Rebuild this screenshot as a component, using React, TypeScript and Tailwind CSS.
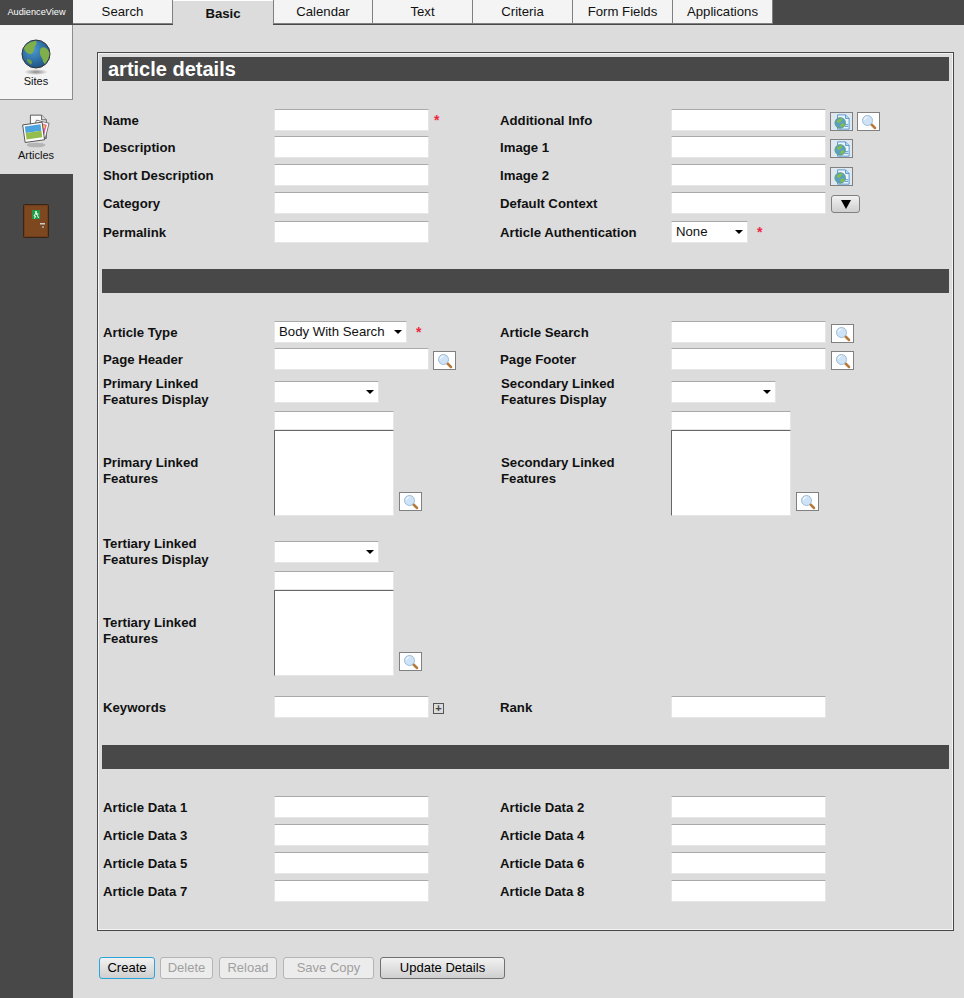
import React from "react";

const tabs = ["Search", "Basic", "Calendar", "Text", "Criteria", "Form Fields", "Applications"];

function Globe({ className }: { className?: string }) {
  return (
    <svg viewBox="0 0 32 38" className={className}>
      <defs>
        <radialGradient id="gl" cx="40%" cy="35%" r="70%">
          <stop offset="0" stopColor="#4a9ad0" />
          <stop offset="1" stopColor="#1c4f80" />
        </radialGradient>
        <radialGradient id="sh" cx="50%" cy="50%" r="50%">
          <stop offset="0" stopColor="#888" />
          <stop offset="1" stopColor="#888" stopOpacity="0" />
        </radialGradient>
      </defs>
      <ellipse cx="16" cy="33" rx="12" ry="3" fill="url(#sh)" />
      <circle cx="16" cy="15" r="14" fill="url(#gl)" stroke="#333" strokeWidth="1" />
      <path d="M4 9c3-5 8-7 12-7 1 2 1 3-1 5-1 3-1 7-4 8-3 0-6-2-7-6z" fill="#7fae4a" />
      <path d="M21 9c3-2 7 0 8.500 5 0 4-2 8-4.500 11-2-1-2-4-3-6-2-2-3-7-1-10z" fill="#7fae4a" />
      <path d="M7 20c2 0 5 1 5 3 0 2-1 3-2 2-2-1-3-3-3-5z" fill="#6d9e44" />
    </svg>
  );
}

function Pictures({ className }: { className?: string }) {
  return (
    <svg viewBox="0 0 30 38" className={className}>
      <ellipse cx="15" cy="34" rx="10" ry="2.500" fill="#b4b4b4" />
      <path d="M9 2h12l5 5v20H9z" fill="#fafafa" stroke="#555" strokeWidth="1" />
      <path d="M21 2v5h5" fill="#ddd" stroke="#555" strokeWidth="1" />
      <g transform="rotate(14 21 18)">
        <rect x="13" y="9" width="14" height="16" fill="#fff" stroke="#555" strokeWidth="0.8" />
        <rect x="15" y="11" width="10" height="11" fill="#ec5fa4" />
        <circle cx="22" cy="14" r="2" fill="#f7c23c" />
      </g>
      <g transform="rotate(-8 12 21)">
        <rect x="2" y="11" width="21" height="19" fill="#fff" stroke="#444" strokeWidth="0.9" />
        <rect x="4" y="13" width="17" height="7" fill="#4ba3df" />
        <rect x="4" y="20" width="17" height="7" fill="#94bd4d" />
      </g>
    </svg>
  );
}

function Door({ className }: { className?: string }) {
  return (
    <svg viewBox="0 0 26 34" className={className}>
      <rect x="0.5" y="0.5" width="25" height="33" rx="1" fill="#6e3d1c" stroke="#3a2415" />
      <rect x="2" y="2" width="22" height="30" fill="#7d4720" />
      <rect x="9" y="6" width="8" height="9" fill="#1f9a45" />
      <circle cx="13" cy="8" r="1" fill="#fff" />
      <path d="M13 9l-2 3h1.500l-1 2.500M13 9l1.500 2.500 1 2.500M13 10h2.500" stroke="#fff" strokeWidth="1" fill="none" />
      <rect x="17" y="19" width="5" height="1.500" fill="#ccc" />
      <rect x="19" y="22" width="2" height="2" fill="#999" />
    </svg>
  );
}

function Magnifier() {
  return (
    <svg viewBox="0 0 16 16" className="w-4 h-4">
      <path d="M9.500 9.500l4.500 4.500" stroke="#b87a3a" strokeWidth="2.500" strokeLinecap="round" />
      <circle cx="6.500" cy="6.500" r="5" fill="#cfe3f6" stroke="#9dbcd8" strokeWidth="1" />
      <path d="M3.500 6a3 3 0 0 1 3-3" stroke="#fff" strokeWidth="1" fill="none" />
    </svg>
  );
}

function FileGlobe() {
  return (
    <svg viewBox="0 0 20 18" className="w-[20px] h-[16px]">
      <path d="M5 1h9l4 4v12H5z" fill="#eaf4fc" stroke="#4d90cf" strokeWidth="1" />
      <path d="M14 1v4h4" fill="#bcd9f2" stroke="#4d90cf" strokeWidth="1" />
      <path d="M13 12h4M13 14h4" stroke="#4d90cf" strokeWidth="1" />
      <circle cx="8" cy="10" r="6" fill="#5a9fc4" stroke="#5f9a6a" strokeWidth="0.800" />
      <path d="M4 8c2-3 5-3 6-3 1 2-1 3-2 4-1 2-3 1-4-1zM9 11c2-1 4 0 4 1-1 2-3 3-4 3-1-1-1-3 0-4z" fill="#84bd4f" />
    </svg>
  );
}

function SearchBtn() {
  return (
    <span className="inline-flex items-center justify-center w-[23px] h-[19px] bg-white border border-[#808080]">
      <Magnifier />
    </span>
  );
}

function FileBtn() {
  return (
    <span className="inline-flex items-center justify-center w-[23px] h-[19px] bg-[#dfe8ef] border border-[#808080]">
      <FileGlobe />
    </span>
  );
}

function Input() {
  return <span className="block w-[155px] h-[22px] bg-white border border-[#e6e6e6] border-t-[#a9a9a9] shrink-0" />;
}

function Select({ w, value }: { w: string; value?: string }) {
  return (
    <span className={`${w} h-[22px] bg-white border border-[#e6e6e6] border-t-[#a9a9a9] flex items-center justify-between pl-1 pr-[4px] text-[13.2px] text-[#111] shrink-0`}>
      <span>{value ?? ""}</span>
      <span className="w-0 h-0 border-x-[4px] border-x-transparent border-t-[4px] border-t-black" />
    </span>
  );
}

function Star() {
  return <span className="text-[#f0243c] text-[14px] font-bold leading-none -mt-[3px]">*</span>;
}

function Field({ label, children }: { label?: React.ReactNode; children?: React.ReactNode }) {
  return (
    <div className="flex items-center">
      <div className="w-[171px] shrink-0 font-bold text-[13.2px] leading-[16px] text-[#111] pt-px">{label}</div>
      <div className="flex items-center">{children}</div>
    </div>
  );
}

function Row({ children, cls }: { children: React.ReactNode; cls?: string }) {
  return <div className={`grid grid-cols-[397px_1fr] ${cls ?? "h-[22px]"}`}>{children}</div>;
}

function Bar({ title }: { title?: string }) {
  return (
    <div className="h-6 bg-[#484848] text-white font-bold text-[20px] leading-6 pl-[6px]">{title}</div>
  );
}

function ListBlock() {
  return (
    <div className="flex items-end">
      <div className="w-[120px]">
        <span className="block h-[19px] bg-white border border-[#e6e6e6] border-t-[#a9a9a9]" />
        <span className="block h-[86px] bg-white border border-[#e6e6e6] border-t-[#666] border-l-[#666]" />
      </div>
      <span className="ml-[5px] mb-[5px] flex"><SearchBtn /></span>
    </div>
  );
}

function Btn({ w, children, disabled, primary }: { w: string; children: React.ReactNode; disabled?: boolean; primary?: boolean }) {
  const cls = disabled
    ? "text-[#a0a0a0] border-[#b4b4b4] bg-[#ececec]"
    : primary
    ? "text-black border-[#2aa5d8] bg-gradient-to-b from-[#f2f2f2] to-[#cfcfcf]"
    : "text-black border-[#707070] bg-gradient-to-b from-[#f2f2f2] to-[#cfcfcf]";
  return (
    <span className={`${w} h-[22px] rounded-[3px] border flex items-center justify-center text-[13px] ${cls}`}>{children}</span>
  );
}

export default function App() {
  return (
    <div className="w-[964px] h-[998px] bg-[#dcdcdc] flex flex-col overflow-hidden font-['Liberation_Sans',Arial,sans-serif]">
      <div className="h-[25px] bg-[#484848] flex shrink-0">
        <div className="w-[73px] text-[9.2px] text-white flex items-center justify-center">AudienceView</div>
        {tabs.map((t) =>
          t === "Basic" ? (
            <div key={t} className="w-[100px] h-[25px] bg-[#dcdcdc] border-t border-white text-[13.2px] font-bold text-[#111] flex items-center justify-center pt-px">{t}</div>
          ) : (
            <div key={t} className={`w-[100px] h-[24px] bg-[#f4f4f4] border-r border-b border-[#808080] text-[13.2px] text-[#111] flex items-center justify-center pt-px ${t === "Calendar" ? "border-l" : ""}`}>{t}</div>
          )
        )}
      </div>
      <div className="flex flex-1 min-h-0">
        <div className="w-[73px] bg-[#484848] shrink-0 flex flex-col">
          <div className="h-[75px] bg-[#f4f4f4] border-b border-r border-[#8c8c8c] flex flex-col items-center pt-[14px] text-[11px] text-[#111]">
            <Globe className="w-[32px] h-[38px] -mb-[3px]" />
            <span className="leading-[14px]">Sites</span>
          </div>
          <div className="h-[74px] bg-[#dcdcdc] flex flex-col items-center pt-[13px] pr-px text-[11px] text-[#111]">
            <Pictures className="w-[28px] h-[36px] -mb-[1px]" />
            <span className="leading-[14px]">Articles</span>
          </div>
          <div className="flex justify-center pt-[30px] pr-[2px]">
            <Door className="w-[26px] h-[34px]" />
          </div>
        </div>
        <div className="flex-1 min-w-0 pl-[24px] pr-[11px] pt-[27px]">
          <div className="w-[857px] h-[879px] border border-[#484848] shadow-[inset_0_0_0_1px_#f4f4f4] pt-1 pl-1 pr-1">
            <Bar title="article details" />
            <div className="pl-px pt-[27px] flex flex-col gap-[6px]">
              <Row>
                <Field label="Name"><Input /><span className="ml-[5px]"><Star /></span></Field>
                <Field label="Additional Info"><Input /><span className="ml-[4px] mt-[3px] flex gap-[4px]"><FileBtn /><SearchBtn /></span></Field>
              </Row>
              <Row>
                <Field label="Description"><Input /></Field>
                <Field label="Image 1"><Input /><span className="ml-[4px] mt-[3px] flex"><FileBtn /></span></Field>
              </Row>
              <Row>
                <Field label="Short Description"><Input /></Field>
                <Field label="Image 2"><Input /><span className="ml-[4px] mt-[3px] flex"><FileBtn /></span></Field>
              </Row>
              <Row>
                <Field label="Category"><Input /></Field>
                <Field label="Default Context">
                  <Input />
                  <span className="ml-[5px] mt-[2px] w-[29px] h-[18px] rounded-[3px] border border-[#808080] bg-gradient-to-b from-[#f2f2f2] to-[#cfcfcf] flex items-center justify-center">
                    <span className="w-0 h-0 border-x-[5px] border-x-transparent border-t-[9px] border-t-black" />
                  </span>
                </Field>
              </Row>
              <Row>
                <Field label="Permalink"><Input /></Field>
                <Field label="Article Authentication"><Select w="w-[77px]" value="None" /><span className="ml-[9px]"><Star /></span></Field>
              </Row>
            </div>

            <div className="mt-[27px]"><Bar /></div>

            <div className="pl-px pt-[27px] flex flex-col">
              <Row>
                <Field label="Article Type"><Select w="w-[133px]" value="Body With Search" /><span className="ml-[9px]"><Star /></span></Field>
                <Field label="Article Search"><Input /><span className="ml-[5px] mt-[3px] flex"><SearchBtn /></span></Field>
              </Row>
              <div className="mt-[6px]"><Row>
                <Field label="Page Header"><Input /><span className="ml-[4px] mt-[3px] flex"><SearchBtn /></span></Field>
                <Field label="Page Footer"><Input /><span className="ml-[5px] mt-[3px] flex"><SearchBtn /></span></Field>
              </Row></div>
              <div className="mt-[5px]"><Row cls="h-[32px]">
                <Field label={<>Primary Linked<br />Features Display</>}><Select w="w-[105px]" /></Field>
                <Field label={<span className="block pl-px">Secondary Linked<br />Features Display</span>}><Select w="w-[105px]" /></Field>
              </Row></div>
              <div className="mt-[4px]"><Row cls="h-[105px]">
                <Field label={<span className="block pt-[14px]">Primary Linked<br />Features</span>}><ListBlock /></Field>
                <Field label={<span className="block pt-[14px] pl-px">Secondary Linked<br />Features</span>}><ListBlock /></Field>
              </Row></div>
              <div className="mt-[19px]"><Row cls="h-[32px]">
                <Field label={<>Tertiary Linked<br />Features Display</>}><Select w="w-[105px]" /></Field>
                <div />
              </Row></div>
              <div className="mt-[4px]"><Row cls="h-[105px]">
                <Field label={<span className="block pt-[14px]">Tertiary Linked<br />Features</span>}><ListBlock /></Field>
                <div />
              </Row></div>
              <div className="mt-[20px]"><Row>
                <Field label="Keywords">
                  <Input />
                  <span className="ml-[4px] mt-[2px] w-[11px] h-[11px] border border-[#555] flex items-center justify-center text-[#444] text-[11px] leading-none font-bold">+</span>
                </Field>
                <Field label="Rank"><Input /></Field>
              </Row></div>
            </div>

            <div className="mt-[27px]"><Bar /></div>

            <div className="pl-px pt-[27px] flex flex-col gap-[6px]">
              {[[1, 2], [3, 4], [5, 6], [7, 8]].map(([a, b]) => (
                <Row key={a}>
                  <Field label={`Article Data ${a}`}><Input /></Field>
                  <Field label={`Article Data ${b}`}><Input /></Field>
                </Row>
              ))}
            </div>
          </div>
          <div className="flex pl-[2px] mt-[26px]">
            <Btn w="w-[56px]" primary>Create</Btn>
            <span className="ml-[5px]"><Btn w="w-[53px]" disabled>Delete</Btn></span>
            <span className="ml-[6px]"><Btn w="w-[58px]" disabled>Reload</Btn></span>
            <span className="ml-[6px]"><Btn w="w-[91px]" disabled>Save Copy</Btn></span>
            <span className="ml-[6px]"><Btn w="w-[125px]">Update Details</Btn></span>
          </div>
        </div>
      </div>
    </div>
  );
}
